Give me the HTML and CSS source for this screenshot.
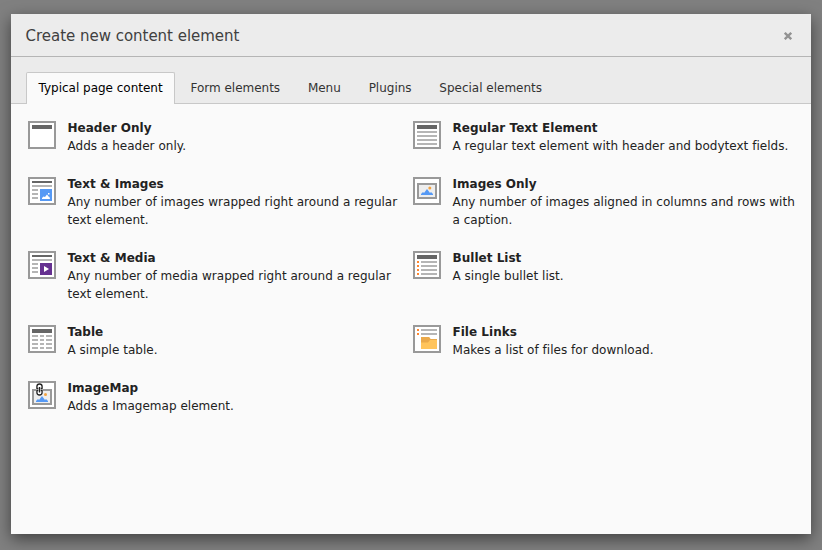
FILE: index.html
```html
<!DOCTYPE html>
<html lang="en">
<head>
<meta charset="utf-8">
<title>Create new content element</title>
<link rel="stylesheet" href="styles.css">
</head>
<body>
<div class="modal">
  <header class="modal-header">
    <h1 class="modal-title">Create new content element</h1>
    <button class="close" aria-label="Close"><svg width="8" height="8" viewBox="0 0 8 8"><path d="M.8.8l6.400 6.400M7.200.8L.8 7.200"/></svg></button>
  </header>
  <nav class="tabs">
    <a class="tab active">Typical page content</a>
    <a class="tab">Form elements</a>
    <a class="tab">Menu</a>
    <a class="tab">Plugins</a>
    <a class="tab">Special elements</a>
  </nav>
  <main class="grid">
    <div class="item">
      <svg class="icon" viewBox="0 0 28 28"><path class="dark" d="M4 4h20v4H4z"/></svg>
      <div class="text"><strong>Header Only</strong><p>Adds a header only.</p></div>
    </div>
    <div class="item">
      <svg class="icon" viewBox="0 0 28 28"><path class="dark" d="M4 4h20v4H4z"/><path class="light" d="M4 10h20v2H4zM4 14h20v2H4zM4 18h20v2H4zM4 22h20v2H4z"/></svg>
      <div class="text"><strong>Regular Text Element</strong><p>A regular text element with header and bodytext fields.</p></div>
    </div>
    <div class="item">
      <svg class="icon" viewBox="0 0 28 28"><path class="dark" d="M4 4h20v2H4z"/><path class="light" d="M4 8h20v2H4zM4 12h6v2H4zM4 16h6v2H4zM4 20h6v2H4z"/><path class="blue" d="M12 12h12v12H12z"/><path class="white" d="M14 22v-1l1.500-1.500 1.500.5 2-2.500 1.500 2 1 .5.500 2zM20 16h1.500v1.500H20z"/></svg>
      <div class="text"><strong>Text &amp; Images</strong><p>Any number of images wrapped right around a regular text element.</p></div>
    </div>
    <div class="item">
      <svg class="icon" viewBox="0 0 28 28"><path class="frame" d="M5 7h18v14H5z"/><path class="blue" d="M8 18v-1l2-2 1 1 3-4 3 4 1-1 2 2v1z"/><circle class="sun" cx="16.800" cy="11" r="1.500"/></svg>
      <div class="text"><strong>Images Only</strong><p>Any number of images aligned in columns and rows with a caption.</p></div>
    </div>
    <div class="item">
      <svg class="icon" viewBox="0 0 28 28"><path class="dark" d="M4 4h20v2H4z"/><path class="light" d="M4 8h20v2H4zM4 12h6v2H4zM4 16h6v2H4zM4 20h6v2H4z"/><path class="purple" d="M12 12h12v12H12z"/><path class="white" d="M16 15l5 3-5 3z"/></svg>
      <div class="text"><strong>Text &amp; Media</strong><p>Any number of media wrapped right around a regular text element.</p></div>
    </div>
    <div class="item">
      <svg class="icon" viewBox="0 0 28 28"><path class="dark" d="M4 4h20v4H4z"/><path class="light" d="M8 10h16v2H8zM8 14h16v2H8zM8 18h16v2H8zM8 22h16v2H8z"/><path class="orange" d="M4 10h2v2H4zM4 14h2v2H4zM4 18h2v2H4zM4 22h2v2H4z"/></svg>
      <div class="text"><strong>Bullet List</strong><p>A single bullet list.</p></div>
    </div>
    <div class="item">
      <svg class="icon" viewBox="0 0 28 28"><path class="dark" d="M4 4h20v4H4z"/><path class="light" d="M4 10h6v2H4zM12 10h4v2h-4zM18 10h6v2h-6zM4 14h6v2H4zM12 14h4v2h-4zM18 14h6v2h-6zM4 18h6v2H4zM12 18h4v2h-4zM18 18h6v2h-6zM4 22h6v2H4zM12 22h4v2h-4zM18 22h6v2h-6z"/></svg>
      <div class="text"><strong>Table</strong><p>A simple table.</p></div>
    </div>
    <div class="item">
      <svg class="icon" viewBox="0 0 28 28"><path class="light" d="M8 4h16v2H8zM8 8h16v2H8z"/><path class="orange" d="M4 4h2v2H4zM4 8h2v2H4z"/><path class="folder" d="M8 12h8l1.500 2H24v10H8z"/><path class="folder-tab" d="M8 12h8l1.500 2H24v1h-7l-2 2.500H8z"/></svg>
      <div class="text"><strong>File Links</strong><p>Makes a list of files for download.</p></div>
    </div>
    <div class="item">
      <svg class="icon" viewBox="0 0 28 28"><path class="frame" d="M5 9h18v14H5z"/><path class="blue" d="M8 21v-1l2-2 1 1 3-4 3 4 1-1 2 2v1z"/><circle class="sun" cx="17.500" cy="13.500" r="1.500"/><path class="white" d="M8 2h7v11l-1 1H9l-1-1z"/><path class="chain" d="M8.900 7.500v-2q0-2.500 2.600-2.500t2.600 2.500v2M8.900 9.500v2q0 2.500 2.600 2.500t2.600-2.500v-2M11.500 6v5.500M8.300 7.500h2M12.700 7.500h2M8.300 9.500h2M12.700 9.500h2"/></svg>
      <div class="text"><strong>ImageMap</strong><p>Adds a Imagemap element.</p></div>
    </div>
  </main>
</div>
</body>
</html>
```
FILE: styles.css
```css
* { box-sizing: border-box; }
body {
  margin: 0;
  height: 550px;
  padding: 14px 11px 16px;
  overflow: hidden;
  background: #808080;
  font: 12px/18px "DejaVu Sans", sans-serif;
  color: #222;
}
.modal {
  height: 520px;
  background: #fafafa;
  box-shadow: 0 5px 15px rgba(0, 0, 0, .5);
}
.modal-header {
  display: flex;
  align-items: center;
  justify-content: space-between;
  height: 43px;
  padding: 1px 19px 0 14.500px;
  background: #ececec;
  border-bottom: 1px solid #b5b5b5;
}
.modal-title {
  margin: 0;
  font-size: 15px;
  font-weight: 400;
  letter-spacing: -.02px;
  color: #404040;
}
.close {
  display: flex;
  padding: 0;
  border: 0;
  background: none;
}
.close path { stroke: #929292; stroke-width: 2.300; }
.tabs {
  display: flex;
  height: 47px;
  padding: 15px 15px 0;
  background: #ebebeb;
  border-bottom: 1px solid #c8c8c8;
}
.tab {
  height: 31px;
  margin-right: 3px;
  padding: 6px 11.300px 0 11.500px;
  border: 1px solid transparent;
  border-bottom: 0;
  letter-spacing: -.01px;
  color: #333;
}
.tab.active {
  height: 32px;
  background: #fafafa;
  border-color: #c8c8c8;
  border-radius: 2px 2px 0 0;
  color: #000;
}
.grid {
  display: grid;
  grid-template-columns: 373px 385px;
  column-gap: 12px;
  row-gap: 20px;
  padding: 15px 17px;
}
.item { display: flex; gap: 11.500px; }
.icon {
  flex: none;
  width: 28px;
  height: 28px;
  margin-top: 2px;
  background: #fff;
  outline: 2px solid #999;
  outline-offset: -2px;
}
.text { letter-spacing: .025px; }
.text strong { display: block; }
.text p { margin: 0; }
.dark { fill: #666; }
.light { fill: #b5b5b5; }
.blue { fill: #5599f5; }
.purple { fill: #653090; }
.orange { fill: #ff8730; }
.sun { fill: #f2a241; }
.white { fill: #fff; }
.frame { fill: #eee; stroke: #999; stroke-width: 2; }
.folder { fill: #ffc45c; }
.folder-tab { fill: #eaa94b; }
.chain { fill: none; stroke: #222; stroke-width: 1.300; }
```
